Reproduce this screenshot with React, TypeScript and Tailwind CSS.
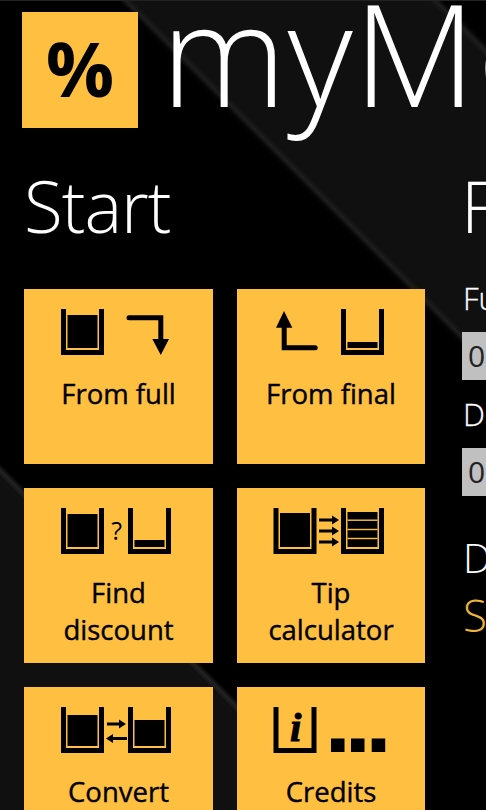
type CupProps = {
  x: number;
  top?: number;
  lines?: number[];
};

const TILE = 'bg-[#ffbf40] h-[175px] flex flex-col items-center text-black';

// U-shaped glass with an optional fill level
function Cup({ x, top, lines }: CupProps) {
  return (
    <g transform={`translate(${x} 0)`}>
      <path d="M0 0h5v41h33V0h5v46H0z" fill="#000" />
      {top !== undefined && <rect x={6.5} y={top} width={30} height={39 - top} fill="#000" />}
      {lines?.map((y) => (
        <rect key={y} x={6.5} y={y} width={30} height={1.4} fill="#ffbf40" />
      ))}
    </g>
  );
}

function Icon({ children }: { children: React.ReactNode }) {
  return (
    <svg width="189" height="46" viewBox="0 0 189 46" className="mt-[20px] shrink-0 overflow-visible">
      {children}
    </svg>
  );
}

function RightArrow({ y, x1 = 82, x2 = 102 }: { y: number; x1?: number; x2?: number }) {
  return (
    <path d={`M${x1} ${y - 1.5}h${x2 - x1 - 7}v-3l7 4.5-7 4.5v-3h-${x2 - x1 - 7}z`} fill="#000" />
  );
}

function Label({ children }: { children: React.ReactNode }) {
  return (
    <div className="mt-[20px] text-center text-[27.5px] leading-[37px] [-webkit-text-stroke:0.4px_black] font-['Open_Sans',sans-serif]">
      {children}
    </div>
  );
}

function Backdrop() {
  return (
    <svg width="486" height="810" viewBox="0 0 486 810" className="absolute inset-0">
      <defs>
        <linearGradient id="band1" gradientUnits="userSpaceOnUse" x1="118" y1="0" x2="125" y2="-7">
          <stop offset="0" stopColor="#000" />
          <stop offset="0.5" stopColor="#1d1d1d" />
          <stop offset="1" stopColor="#101010" />
        </linearGradient>
        <linearGradient id="band2" gradientUnits="userSpaceOnUse" x1="428" y1="0" x2="435" y2="-7">
          <stop offset="0" stopColor="#101010" />
          <stop offset="0.5" stopColor="#1d1d1d" />
          <stop offset="1" stopColor="#000" />
        </linearGradient>
        <linearGradient id="band3" gradientUnits="userSpaceOnUse" x1="0" y1="463" x2="-7" y2="470">
          <stop offset="0" stopColor="#000" />
          <stop offset="0.5" stopColor="#222" />
          <stop offset="1" stopColor="#101010" />
        </linearGradient>
      </defs>
      <polygon points="118,0 442,0 486,44 486,368" fill="#101010" />
      <polygon points="118,0 132,0 486,354 486,368" fill="url(#band1)" />
      <polygon points="428,0 442,0 486,44 486,58" fill="url(#band2)" />
      <polygon points="0,477 0,810 333,810" fill="#101010" />
      <polygon points="0,463 0,477 333,810 347,810" fill="url(#band3)" />
      <rect width="486" height="1" fill="#222" />
    </svg>
  );
}

export default function App() {
  return (
    <div className="relative w-[486px] h-[810px] overflow-hidden bg-black text-white font-['Open_Sans',sans-serif]">
      <Backdrop />
      <div className="relative">
        {/* header */}
        <div className="flex pl-[22px] pt-[12px] h-[170px]">
          <div className="w-[116px] h-[116px] shrink-0 bg-[#ffbf40] flex items-center justify-center text-black text-[76px] font-bold leading-none pb-[5px]">
            %
          </div>
          <div className="ml-[23px] -mt-[60px] text-[142px] leading-[200px] font-light tracking-[1px] whitespace-nowrap">myMo</div>
        </div>

        <div className="flex">
          {/* start panel */}
          <div className="w-[462px] shrink-0 pl-[24px]">
            <div className="text-[71px] leading-[76px] font-light tracking-[-1px] -mt-[2px]">Start</div>
            <div className="mt-[45px] grid grid-cols-[189px_188px] gap-6 w-[401px]">
              <div className={TILE}>
                <Icon>
                  <Cup x={37} top={6} />
                  <path d="M105 8.8h31.8v22" fill="none" stroke="#000" strokeWidth="5" strokeLinecap="round" />
                  <polygon points="128.3,30 145,30 136.8,46" fill="#000" />
                </Icon>
                <Label>From full</Label>
              </div>
              <div className={TILE}>
                <Icon>
                  <path d="M47.2 18v20.8h31" fill="none" stroke="#000" strokeWidth="5" strokeLinecap="round" />
                  <polygon points="47,2 39,18.7 55.3,18.7" fill="#000" />
                  <Cup x={104} top={33} />
                </Icon>
                <Label>From final</Label>
              </div>
              <div className={TILE}>
                <Icon>
                  <Cup x={37} top={6} />
                  <text x="92.7" y="32" textAnchor="middle" fontSize="25" fontFamily="Open Sans, sans-serif" fill="#000">?</text>
                  <Cup x={104} top={32} />
                </Icon>
                <Label>
                  Find
                  <br />
                  discount
                </Label>
              </div>
              <div className={TILE}>
                <Icon>
                  <Cup x={36.5} top={5} />
                  <RightArrow y={12} />
                  <RightArrow y={23} />
                  <RightArrow y={34} />
                  <Cup x={104} top={4} lines={[11.5, 20.8, 29.8]} />
                </Icon>
                <Label>
                  Tip
                  <br />
                  calculator
                </Label>
              </div>
              <div className={TILE}>
                <Icon>
                  <Cup x={37} top={8} />
                  <RightArrow y={17} x1={83} x2={102} />
                  <path d="M82 31.6l7-4.5v3h14v3H89v3z" fill="#000" />
                  <Cup x={104} top={13} />
                </Icon>
                <Label>Convert</Label>
              </div>
              <div className={TILE}>
                <Icon>
                  <Cup x={36.5} />
                  <text x="58.7" y="34" textAnchor="middle" fontSize="41" fontWeight="700" fontStyle="italic" fontFamily="Liberation Serif, serif" fill="#000" stroke="#000" strokeWidth="1">i</text>
                  <rect x="94" y="31.5" width="13.5" height="13.5" fill="#000" />
                  <rect x="114" y="31.5" width="13.5" height="13.5" fill="#000" />
                  <rect x="134.7" y="31.5" width="13.5" height="13.5" fill="#000" />
                </Icon>
                <Label>Credits</Label>
              </div>
            </div>
          </div>

          {/* form panel, mostly off screen */}
          <div className="w-[300px] shrink-0">
            <div className="-mt-[2px] -ml-[1px] text-[71px] leading-[76px] font-light">F</div>
            <div className="mt-[34px] pl-[1px] text-[31px] leading-[40px] font-light [-webkit-text-stroke:0.3px_white]">Fu</div>
            <div className="mt-[14px] h-[48px] bg-[#c0c0c0] text-[#222] text-[30px] leading-[48px] pl-[6px]">0</div>
            <div className="mt-[14px] pl-[1px] text-[31px] leading-[40px] font-light [-webkit-text-stroke:0.3px_white]">D</div>
            <div className="mt-[14px] h-[48px] bg-[#c0c0c0] text-[#222] text-[30px] leading-[48px] pl-[6px]">0</div>
            <div className="mt-[37px] pl-[1px] text-[40px] leading-[50px] font-light">D</div>
            <div className="mt-[4px] pl-[1px] text-[44px] leading-[56px] font-light text-[#ecb439]">S</div>
          </div>
        </div>
      </div>
    </div>
  );
}
